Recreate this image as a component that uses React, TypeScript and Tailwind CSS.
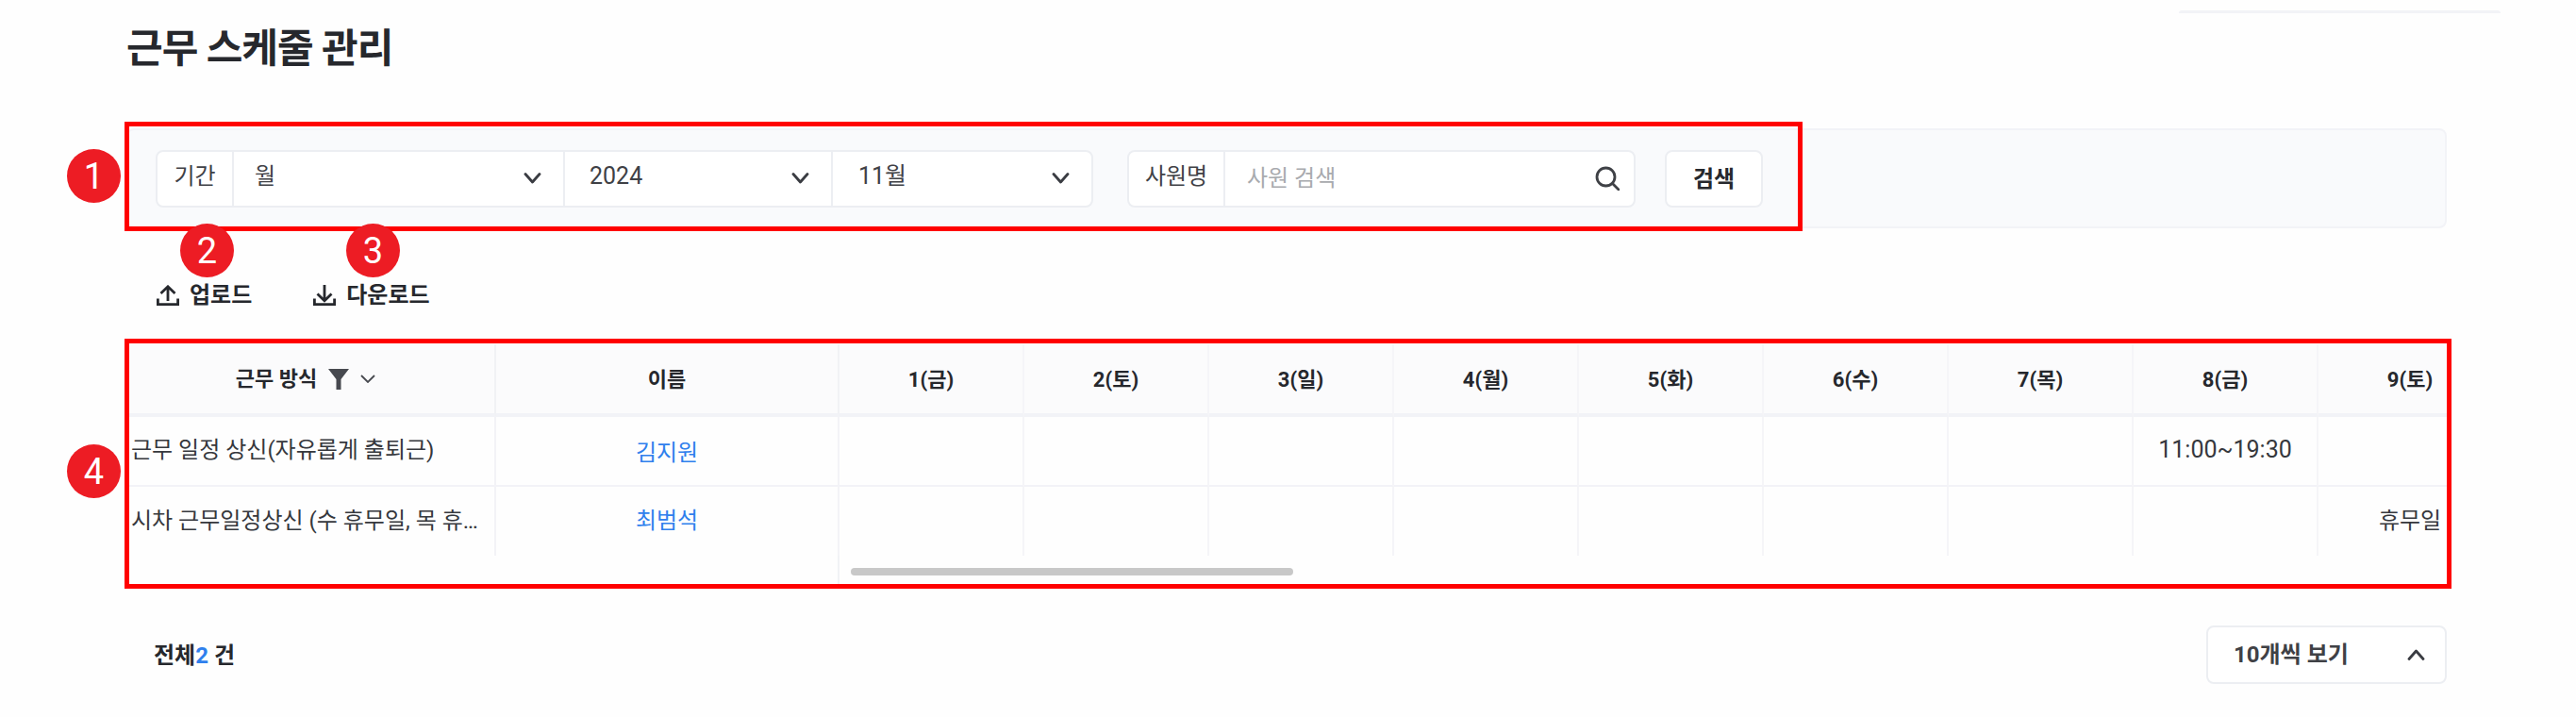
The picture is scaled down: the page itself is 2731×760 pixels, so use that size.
import React from "react";

const days = ["1(금)", "2(토)", "3(일)", "4(월)", "5(화)", "6(수)", "7(목)", "8(금)", "9(토)"];

function Chevron({ up = false, className = "" }: { up?: boolean; className?: string }) {
  return (
    <svg viewBox="0 0 19 12" className={"w-[19px] h-[12px] shrink-0 " + className} fill="none" stroke="#3a3c42" strokeWidth="2.8" strokeLinecap="round" strokeLinejoin="round">
      <path d={up ? "M2 10.5 L9.5 2 L17 10.5" : "M2 1.5 L9.5 10 L17 1.5"} />
    </svg>
  );
}

function Sel({ w, pl, label, size }: { w: string; pl: string; label: string; size: string }) {
  return (
    <div className={"flex shrink-0 items-center justify-between pr-[23px] h-full border-l-2 border-[#eceef2] text-[#3f4146] " + size + " " + w + " " + pl}>
      <span className="-translate-y-[2px]">{label}</span>
      <Chevron />
    </div>
  );
}

function Upload() {
  return (
    <svg viewBox="0 0 24 22" className="w-[24px] h-[22px]" fill="none" stroke="#26282d" strokeWidth="2.8">
      <path d="M12 17 V2 M4.5 9 L12 1.8 L19.5 9" />
      <path d="M1.4 14.5 V20.6 H22.6 V14.5" />
    </svg>
  );
}

function Download() {
  return (
    <svg viewBox="0 0 24 22" className="w-[24px] h-[22px]" fill="none" stroke="#26282d" strokeWidth="2.8">
      <path d="M12 0 V16 M4.5 9.5 L12 16.8 L19.5 9.5" />
      <path d="M1.4 14.5 V20.6 H22.6 V14.5" />
    </svg>
  );
}

function Badge({ n, className }: { n: string; className: string }) {
  return (
    <div className={"absolute w-[57px] h-[57px] rounded-full bg-[#ed1c24] text-white flex items-center justify-center text-[38px] leading-none " + className}>
      {n}
    </div>
  );
}

const hCell = "h-[77px] bg-[#fbfbfc] border-b-4 border-[#f2f3f7] flex items-center justify-center text-[22px] font-bold text-[#26282d]";
const bCell = "h-[74px] border-b-2 border-[#f3f3f7] flex items-center justify-center text-[24px]";
const bLast = "h-[73px] flex items-center justify-center text-[24px]";

export default function App() {
  return (
    <div className="relative w-[2731px] h-[760px] overflow-hidden bg-[#fefefe] pt-[11px] text-[#36383d] font-['Roboto','Noto_Sans_CJK_KR',sans-serif]">
      <div className="flex justify-end pr-[80px]">
        <div className="w-[341px] h-[3px] border-t-[3px] border-[#f2f3f7] rounded-t-xl" />
      </div>

      <div className="ml-[134px] w-[2460px]">
        <h1 className="h-[76px] mb-[46px] flex items-center text-[42px] tracking-[-1px] font-bold text-[#26282d] leading-none">근무 스케줄 관리</h1>

        <div className="h-[106px] rounded-lg border-2 border-[#f2f3f7] bg-[#f9fafc] pl-[29px] flex items-center">
          <div className="w-[994px] h-[61px] flex items-center rounded-lg border-2 border-[#eceef2] bg-white">
            <div className="w-[79px] shrink-0 text-center text-[24px] text-[#3f4146] -translate-y-[2px]">기간</div>
            <Sel w="w-[351px]" pl="pl-[22px]" size="text-[24px]" label="월" />
            <Sel w="w-[284px]" pl="pl-[26px]" size="text-[25px]" label="2024" />
            <Sel w="w-[276px]" pl="pl-[27px]" size="text-[25px]" label="11월" />
          </div>
          <div className="ml-[36px] w-[539px] h-[61px] flex items-center rounded-lg border-2 border-[#eceef2] bg-white">
            <div className="w-[100px] shrink-0 text-center text-[24px] text-[#3f4146] -translate-y-[2px]">사원명</div>
            <div className="flex-1 h-full border-l-2 border-[#eceef2] flex items-center pl-[23px] pr-[15px] justify-between">
              <span className="text-[24px] text-[#a8aaae]">사원 검색</span>
              <svg viewBox="0 0 26 26" className="w-[26px] h-[26px]" fill="none" stroke="#3f4146" strokeWidth="2.8" strokeLinecap="round">
                <circle cx="11.5" cy="11.5" r="9.5" />
                <path d="M18.5 18.5 L25 25" />
              </svg>
            </div>
          </div>
          <button className="ml-[31px] w-[104px] h-[61px] pt-[2px] rounded-lg border-2 border-[#eceef2] bg-white text-[24px] font-bold text-[#26282d]">검색</button>
        </div>

        <div className="mt-[48px] mb-[31px] h-[44px] pl-[32px] pt-[1px] flex items-center text-[24px] font-bold text-[#26282d]">
          <div className="flex items-center gap-[11px]"><Upload /><span>업로드</span></div>
          <div className="flex items-center gap-[11px] ml-[65px]"><Download /><span>다운로드</span></div>
        </div>

        <div className="rounded-t-lg overflow-hidden">
          <div className="grid grid-cols-[392px_364px_repeat(9,196px)]">
            <div className={hCell + " border-r-2 border-r-[#f1f2f5] gap-[12px] pr-[10px]"}>
              <span>근무 방식</span>
              <svg viewBox="0 0 22 22" className="w-[22px] h-[22px]" fill="#47494f"><path d="M0 0 H22 L13.5 11 V22 H8.5 V11 Z" /></svg>
              <svg viewBox="0 0 16 9" className="w-[16px] h-[9px]" fill="none" stroke="#47494f" strokeWidth="1.8"><path d="M1 1 L8 8 L15 1" /></svg>
            </div>
            <div className={hCell + " border-r-2 border-r-[#f1f2f5] pt-[2px]"}>이름</div>
            {days.map((d) => (
              <div key={d} className={hCell + " border-r-2 border-r-[#f5f5f8] pt-[2px]"}>{d}</div>
            ))}

            <div className={bCell + " justify-start pl-[5px] border-r-2 border-r-[#f3f3f7] pb-[3px]"}>근무 일정 상신(자유롭게 출퇴근)</div>
            <div className={bCell + " border-r-2 border-r-[#f3f3f7] text-[#2f80ed] pt-[3px]"}>김지원</div>
            {days.map((d) => (
              <div key={d} className={bCell + " border-r-2 border-r-[#f5f5f8] pb-[3px] text-[25px]"}>{d === "8(금)" ? "11:00~19:30" : ""}</div>
            ))}

            <div className={bLast + " justify-start pl-[5px] pr-[16px] border-r-2 border-[#f3f3f7] pb-[1px]"}>
              <span className="truncate">시차 근무일정상신 (수 휴무일, 목 휴무일)</span>
            </div>
            <div className={bLast + " border-r-2 border-[#f3f3f7] text-[#2f80ed] pb-[2px]"}>최범석</div>
            {days.map((d) => (
              <div key={d} className={bLast + " border-r-2 border-[#f5f5f8] pb-[2px]"}>{d === "9(토)" ? "휴무일" : ""}</div>
            ))}
          </div>
          <div className="h-[30px] flex">
            <div className="w-[756px] border-r-2 border-[#f1f2f5]" />
            <div className="pl-[12px] pt-[13px]">
              <div className="w-[469px] h-[8px] rounded-full bg-[#c8c8c8]" />
            </div>
          </div>
        </div>

        <div className="mt-[44px] h-[62px] flex items-center justify-between">
          <div className="pl-[29px] pt-[2px] text-[24px] font-bold text-[#26282d]">
            전체<span className="text-[#2f80ed]">2</span> 건
          </div>
          <div className="w-[255px] h-[62px] rounded-lg border-2 border-[#eceef2] bg-white flex items-center justify-between pl-[27px] pr-[21px] text-[24px] font-bold text-[#3f4146]">
            <span>10개씩 보기</span>
            <Chevron up />
          </div>
        </div>
      </div>

      <div className="absolute left-[132px] top-[129px] w-[1779px] h-[116px] border-[5px] border-[#ff0000]" />
      <div className="absolute left-[132px] top-[359px] w-[2467px] h-[265px] border-[5px] border-[#ff0000]" />
      <Badge n="1" className="left-[71px] top-[158px]" />
      <Badge n="2" className="left-[191px] top-[237px]" />
      <Badge n="3" className="left-[367px] top-[237px]" />
      <Badge n="4" className="left-[71px] top-[471px]" />
    </div>
  );
}
